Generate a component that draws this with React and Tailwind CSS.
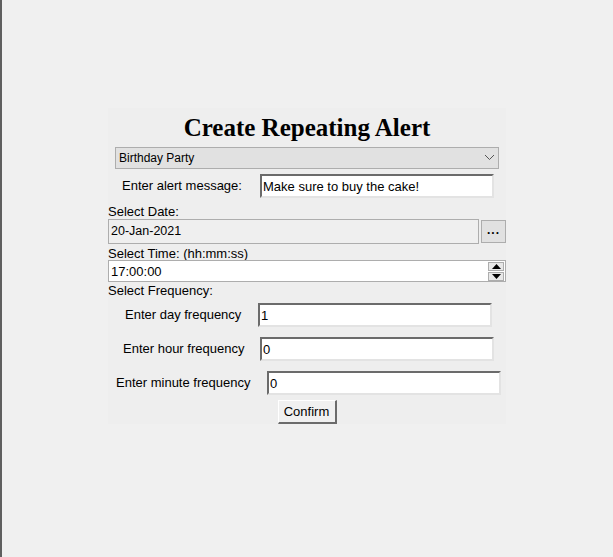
import { useState } from 'react';

const sunken =
  'border-2 border-t-[#6b6b6b] border-l-[#6b6b6b] border-b-[#e3e3e3] border-r-[#e3e3e3] bg-white px-[1px] text-[13px] outline-none';

const FrequencyRow = ({ label, value, onChange, labelPad, inputLeft, top }) => (
  <div className="flex items-center" style={{ marginTop: top }}>
    <span className="shrink-0" style={{ paddingLeft: labelPad, width: inputLeft }}>
      {label}
    </span>
    <input
      className={`${sunken} h-[24px] w-[234px]`}
      value={value}
      onChange={(e) => onChange(e.target.value)}
    />
  </div>
);

const App = () => {
  const [alertName, setAlertName] = useState('Birthday Party');
  const [message, setMessage] = useState('Make sure to buy the cake!');
  const [time, setTime] = useState('17:00:00');
  const [day, setDay] = useState('1');
  const [hour, setHour] = useState('0');
  const [minute, setMinute] = useState('0');

  return (
    <div
      className="h-[557px] w-full overflow-hidden border-l-2 border-l-[#5f5f5f] bg-[#f0f0f0] text-[13px] text-black"
      style={{ fontFamily: '"Liberation Sans", Arial, sans-serif' }}
    >
      <div className="ml-[106px] mt-[108px] flex w-[398px] flex-col bg-[#eeeeee]">
        {/* title */}
        <h1
          className="h-[39px] pt-[5px] text-center text-[25px] font-bold leading-[29px]"
          style={{ fontFamily: '"Liberation Serif", "Times New Roman", serif' }}
        >
          Create Repeating Alert
        </h1>

        {/* alert dropdown */}
        <div className="relative mx-[7px] h-[22px] border border-[#adadad] bg-[#e1e1e1]">
          <select
            className="h-full w-full appearance-none bg-transparent pl-[3px] text-[12px] outline-none"
            value={alertName}
            onChange={(e) => setAlertName(e.target.value)}
          >
            <option>Birthday Party</option>
          </select>
          <svg
            className="pointer-events-none absolute right-[3px] top-[6px]"
            width="11"
            height="7"
            viewBox="0 0 11 7"
          >
            <path d="M1 1 L5.5 5.5 L10 1" fill="none" stroke="#555" strokeWidth="1" />
          </svg>
        </div>

        {/* message */}
        <div className="mt-[5px] flex items-center">
          <span className="w-[152px] shrink-0 pl-[14px]">Enter alert message:</span>
          <input
            className={`${sunken} h-[24px] w-[234px]`}
            value={message}
            onChange={(e) => setMessage(e.target.value)}
          />
        </div>

        {/* date */}
        <div className="mt-[5px] h-[16px] leading-[18px]">Select Date:</div>
        <div className="flex items-center gap-[2px]">
          <div className="flex h-[25px] w-[371px] items-center border border-[#adadad] bg-[#efefef] pl-[2px] text-[12.5px]">
            20-Jan-2021
          </div>
          <button className="flex h-[23px] w-[25px] items-center justify-center border border-[#adadad] bg-[#e1e1e1] pb-[3px] text-[12px] font-bold tracking-[1px]">
            ...
          </button>
        </div>

        {/* time */}
        <div className="h-[16px] leading-[20px]">Select Time: (hh:mm:ss)</div>
        <div className="flex h-[22px] items-center border border-[#adadad] bg-white pl-[2px] pr-[1px]">
          <input
            className="h-full flex-1 bg-transparent text-[13px] outline-none"
            value={time}
            onChange={(e) => setTime(e.target.value)}
          />
          <div className="flex flex-col gap-[1px]">
            <button className="flex h-[9px] w-[16px] items-center justify-center border border-[#adadad] bg-[#e8e8e8]">
              <svg width="9" height="5" viewBox="0 0 9 5">
                <path d="M4.5 0 L9 5 L0 5 Z" fill="#000" />
              </svg>
            </button>
            <button className="flex h-[9px] w-[16px] items-center justify-center border border-[#adadad] bg-[#e8e8e8]">
              <svg width="9" height="5" viewBox="0 0 9 5">
                <path d="M0 0 L9 0 L4.5 5 Z" fill="#000" />
              </svg>
            </button>
          </div>
        </div>

        {/* frequency */}
        <div className="mt-[1px] h-[16px] leading-[16px]">Select Frequency:</div>
        <FrequencyRow
          label="Enter day frequency"
          value={day}
          onChange={setDay}
          labelPad={17}
          inputLeft={150}
          top={4}
        />
        <FrequencyRow
          label="Enter hour frequency"
          value={hour}
          onChange={setHour}
          labelPad={15}
          inputLeft={152}
          top={10}
        />
        <FrequencyRow
          label="Enter minute frequency"
          value={minute}
          onChange={setMinute}
          labelPad={8}
          inputLeft={159}
          top={10}
        />

        <div className="mt-[5px] flex justify-center">
          <button className="h-[24px] w-[59px] border border-b-2 border-r-2 border-t-white border-l-white border-b-[#6b6b6b] border-r-[#6b6b6b] bg-[#f0f0f0] text-[13px]">
            Confirm
          </button>
        </div>
      </div>
    </div>
  );
};

export default App;
